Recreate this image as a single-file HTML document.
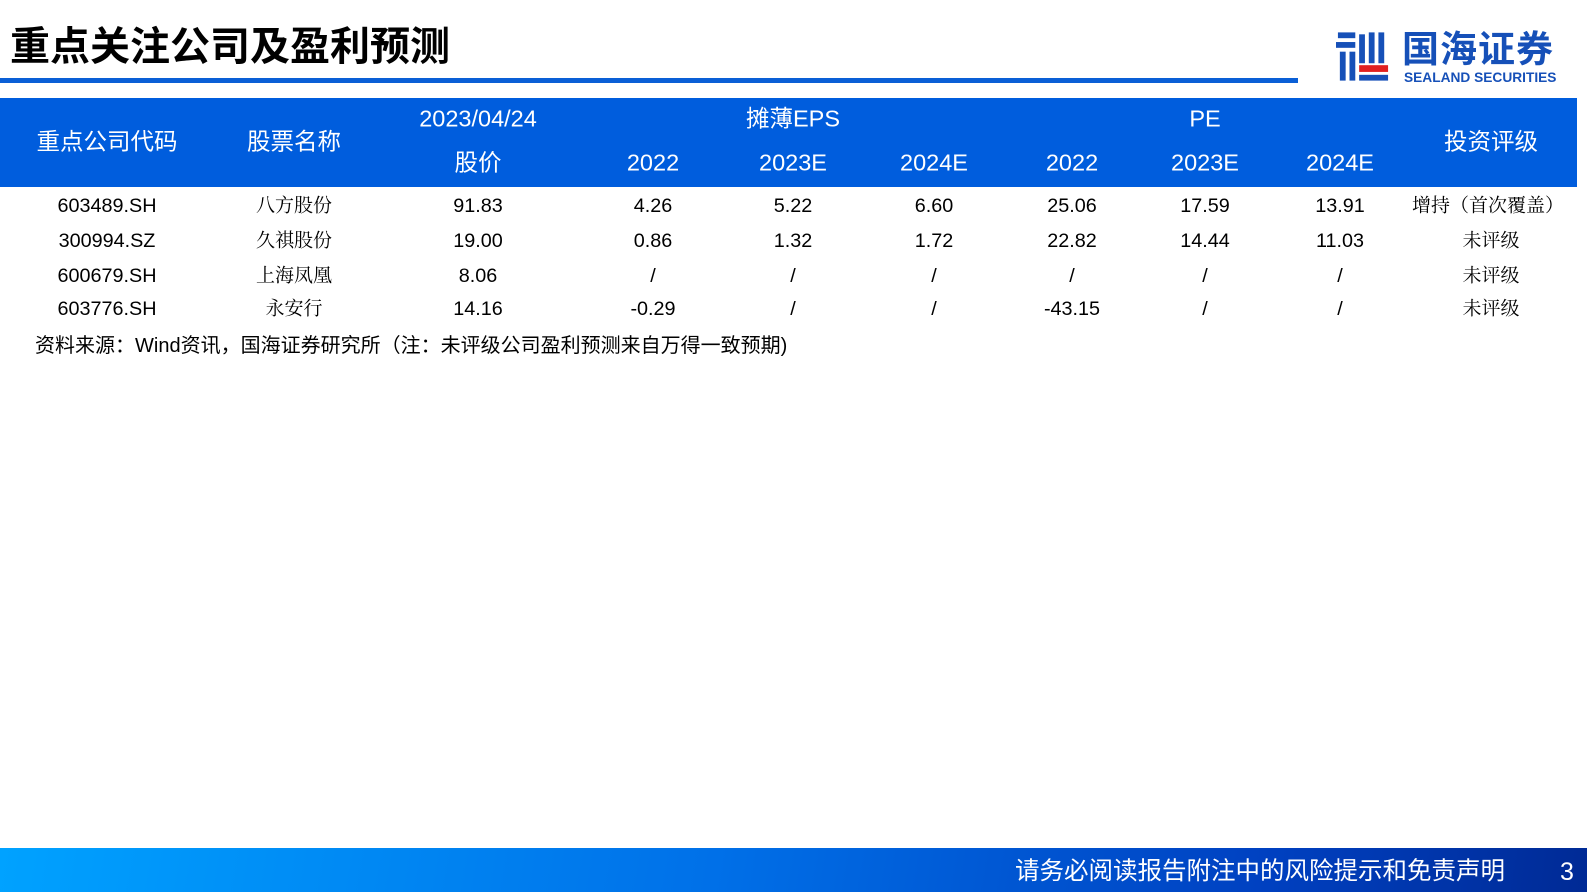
<!DOCTYPE html>
<html><head><meta charset="utf-8"><style>
body{margin:0;width:1587px;height:892px;position:relative;background:#fff;font-family:"Liberation Sans","Noto Sans CJK SC",sans-serif;overflow:hidden}
.a{position:absolute;white-space:nowrap;line-height:1}
.c{position:absolute;transform:translate(-50%,-50%);white-space:nowrap;line-height:1}
.h{color:#fff;font-size:23.5px}
.r{color:#000;font-size:19.8px;margin-top:2px}
.s{font-family:"Noto Serif CJK SC",serif;font-size:19px;margin-top:-1px}
</style></head><body>
<div class="c" style="left:230px;top:47px;font-size:40px;font-weight:bold;color:#000">重点关注公司及盈利预测</div>
<div class="a" style="left:0;top:78px;width:1298px;height:5px;background:#0a5fd6"></div>
<svg class="a" style="left:1336px;top:30px" width="54" height="53" viewBox="0 0 56 54">
<rect x="2" y="2" width="18" height="6" fill="#1650b8"/>
<rect x="0" y="12" width="20" height="6" fill="#1650b8"/>
<rect x="4" y="22" width="6" height="30" fill="#1650b8"/>
<rect x="14" y="22" width="6" height="30" fill="#1650b8"/>
<rect x="24" y="4" width="6" height="30" fill="#1650b8"/>
<rect x="34" y="2" width="6" height="32" fill="#1650b8"/>
<rect x="44" y="2" width="6" height="32" fill="#1650b8"/>
<rect x="24" y="36" width="30" height="7" fill="#e02020"/>
<rect x="24" y="46" width="30" height="6" fill="#1650b8"/>
</svg>
<div class="a" style="left:1402px;top:31px;font-size:37px;font-weight:bold;color:#1650b8;letter-spacing:1px">国海证券</div>
<div class="a" style="left:1404px;top:70px;font-size:14px;font-weight:bold;color:#1650b8;transform:scaleX(0.98);transform-origin:left">SEALAND SECURITIES</div>
<div class="a" style="left:0;top:98px;width:1577px;height:89px;background:#005ddd"></div>
<div class="c h" style="left:107px;top:142px">重点公司代码</div>
<div class="c h" style="left:294px;top:142px">股票名称</div>
<div class="c h" style="left:478px;top:119px">2023/04/24</div>
<div class="c h" style="left:478px;top:163px">股价</div>
<div class="c h" style="left:793px;top:119px">摊薄EPS</div>
<div class="c h" style="left:1205px;top:119px">PE</div>
<div class="c h" style="left:653px;top:163px">2022</div>
<div class="c h" style="left:793px;top:163px">2023E</div>
<div class="c h" style="left:934px;top:163px">2024E</div>
<div class="c h" style="left:1072px;top:163px">2022</div>
<div class="c h" style="left:1205px;top:163px">2023E</div>
<div class="c h" style="left:1340px;top:163px">2024E</div>
<div class="c h" style="left:1491px;top:142px">投资评级</div>

<div class="c r" style="left:107px;top:205px">603489.SH</div><div class="c r s" style="left:294px;top:205px">八方股份</div><div class="c r" style="left:478px;top:205px">91.83</div><div class="c r" style="left:653px;top:205px">4.26</div><div class="c r" style="left:793px;top:205px">5.22</div><div class="c r" style="left:934px;top:205px">6.60</div><div class="c r" style="left:1072px;top:205px">25.06</div><div class="c r" style="left:1205px;top:205px">17.59</div><div class="c r" style="left:1340px;top:205px">13.91</div><div class="c r s" style="left:1488px;top:205px">增持（首次覆盖）</div>

<div class="c r" style="left:107px;top:240px">300994.SZ</div><div class="c r s" style="left:294px;top:240px">久祺股份</div><div class="c r" style="left:478px;top:240px">19.00</div><div class="c r" style="left:653px;top:240px">0.86</div><div class="c r" style="left:793px;top:240px">1.32</div><div class="c r" style="left:934px;top:240px">1.72</div><div class="c r" style="left:1072px;top:240px">22.82</div><div class="c r" style="left:1205px;top:240px">14.44</div><div class="c r" style="left:1340px;top:240px">11.03</div><div class="c r s" style="left:1491px;top:240px">未评级</div>

<div class="c r" style="left:107px;top:275px">600679.SH</div><div class="c r s" style="left:294px;top:275px">上海凤凰</div><div class="c r" style="left:478px;top:275px">8.06</div><div class="c r" style="left:653px;top:275px">/</div><div class="c r" style="left:793px;top:275px">/</div><div class="c r" style="left:934px;top:275px">/</div><div class="c r" style="left:1072px;top:275px">/</div><div class="c r" style="left:1205px;top:275px">/</div><div class="c r" style="left:1340px;top:275px">/</div><div class="c r s" style="left:1491px;top:275px">未评级</div>

<div class="c r" style="left:107px;top:308px">603776.SH</div><div class="c r s" style="left:294px;top:308px">永安行</div><div class="c r" style="left:478px;top:308px">14.16</div><div class="c r" style="left:653px;top:308px">-0.29</div><div class="c r" style="left:793px;top:308px">/</div><div class="c r" style="left:934px;top:308px">/</div><div class="c r" style="left:1072px;top:308px">-43.15</div><div class="c r" style="left:1205px;top:308px">/</div><div class="c r" style="left:1340px;top:308px">/</div><div class="c r s" style="left:1491px;top:308px">未评级</div>

<div class="a" style="left:35px;top:336px;font-size:20px;color:#000">资料来源：Wind资讯，国海证券研究所（注：未评级公司盈利预测来自万得一致预期)</div>
<div class="a" style="left:0;top:848px;width:1587px;height:44px;background:linear-gradient(100deg,#00a2ff 0%,#0070e8 45%,#0040c0 80%,#002a95 100%)"></div>
<div class="a" style="left:1015px;top:860px;font-size:24.5px;color:#fff">请务必阅读报告附注中的风险提示和免责声明</div>
<div class="a" style="left:1560px;top:860px;font-size:25px;color:#fff">3</div>
</body></html>
